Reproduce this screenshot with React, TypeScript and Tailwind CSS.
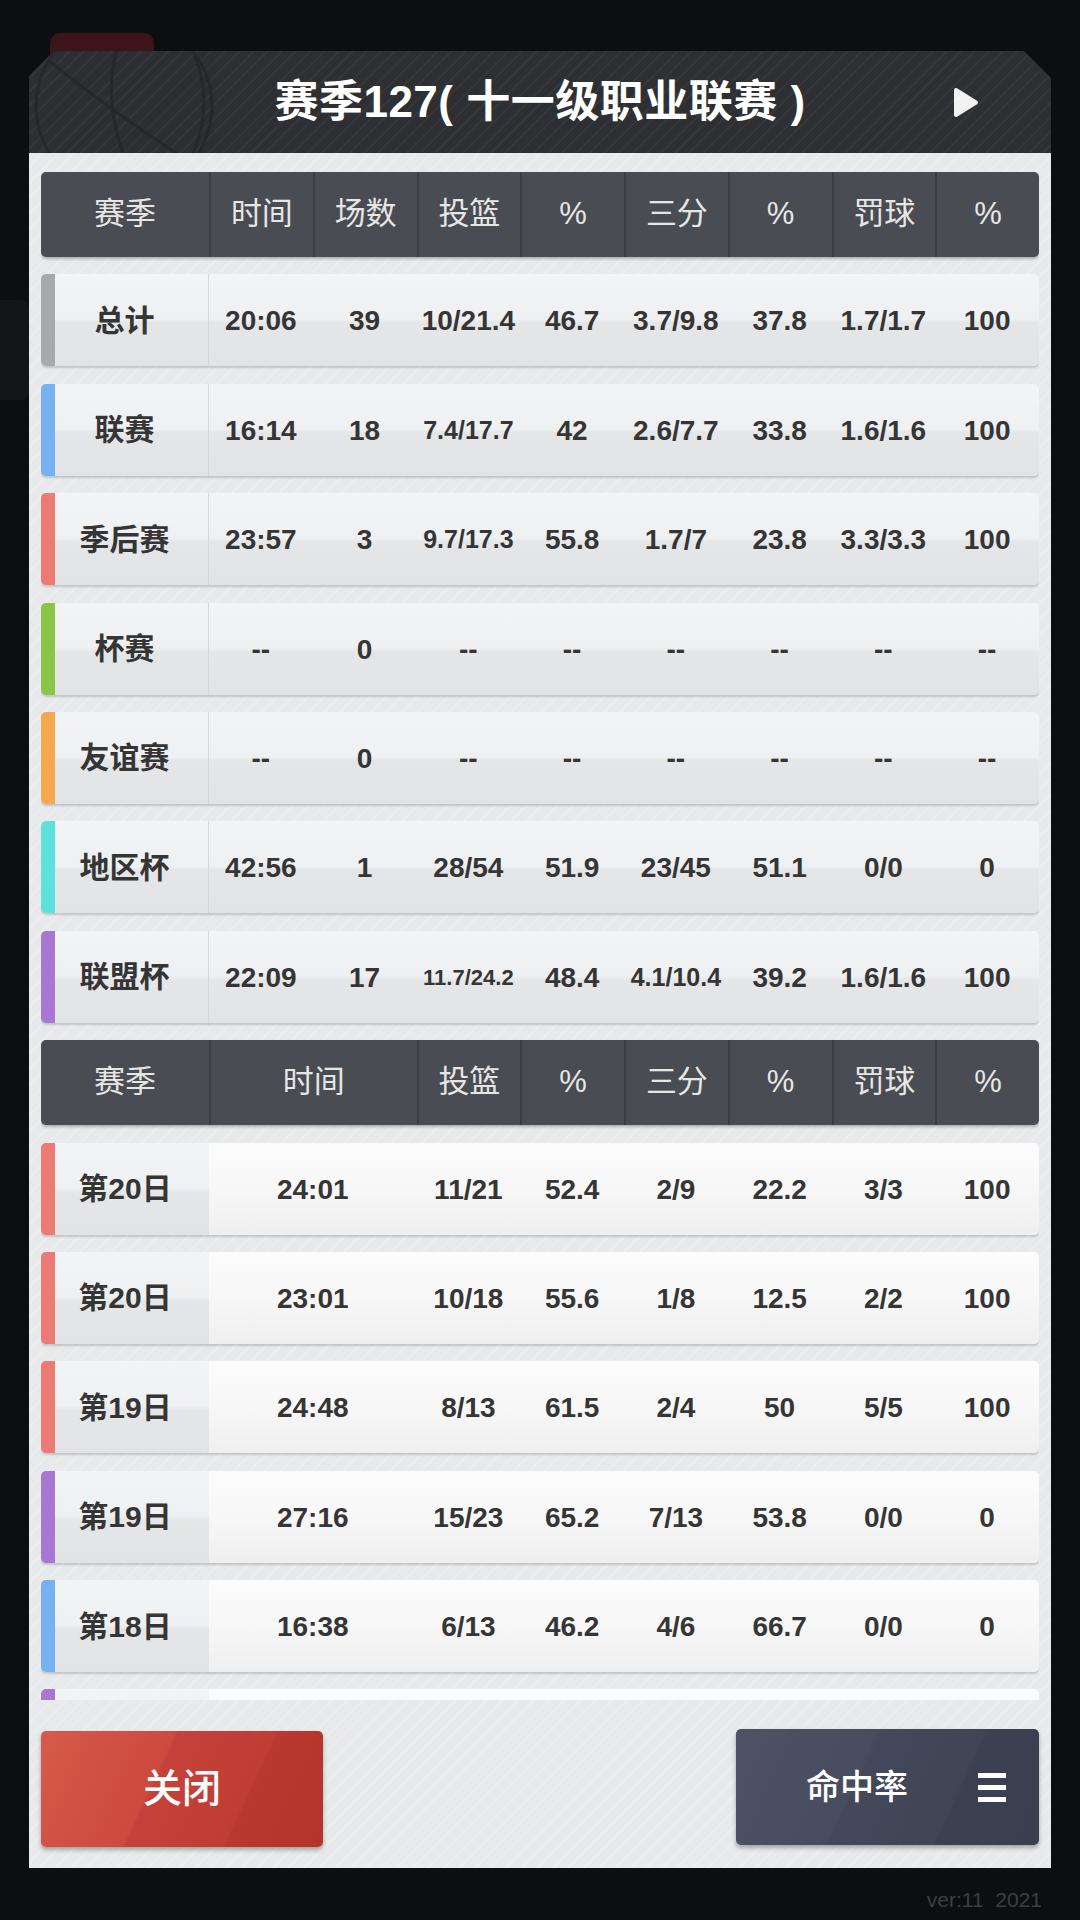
import React from "react";

type Row = { label: string; bar: string; vals: string[] };

const table1: Row[] = [
  { label: "总计", bar: "border-[#a9a9a9]", vals: ["20:06", "39", "10/21.4", "46.7", "3.7/9.8", "37.8", "1.7/1.7", "100"] },
  { label: "联赛", bar: "border-[#76b2f2]", vals: ["16:14", "18", "7.4/17.7", "42", "2.6/7.7", "33.8", "1.6/1.6", "100"] },
  { label: "季后赛", bar: "border-[#ec7a77]", vals: ["23:57", "3", "9.7/17.3", "55.8", "1.7/7", "23.8", "3.3/3.3", "100"] },
  { label: "杯赛", bar: "border-[#8cc545]", vals: ["--", "0", "--", "--", "--", "--", "--", "--"] },
  { label: "友谊赛", bar: "border-[#f3a851]", vals: ["--", "0", "--", "--", "--", "--", "--", "--"] },
  { label: "地区杯", bar: "border-[#5fe1db]", vals: ["42:56", "1", "28/54", "51.9", "23/45", "51.1", "0/0", "0"] },
  { label: "联盟杯", bar: "border-[#a777d1]", vals: ["22:09", "17", "11.7/24.2", "48.4", "4.1/10.4", "39.2", "1.6/1.6", "100"] },
];

const table2: Row[] = [
  { label: "第20日", bar: "border-[#ec7a77]", vals: ["24:01", "11/21", "52.4", "2/9", "22.2", "3/3", "100"] },
  { label: "第20日", bar: "border-[#ec7a77]", vals: ["23:01", "10/18", "55.6", "1/8", "12.5", "2/2", "100"] },
  { label: "第19日", bar: "border-[#ec7a77]", vals: ["24:48", "8/13", "61.5", "2/4", "50", "5/5", "100"] },
  { label: "第19日", bar: "border-[#a777d1]", vals: ["27:16", "15/23", "65.2", "7/13", "53.8", "0/0", "0"] },
  { label: "第18日", bar: "border-[#76b2f2]", vals: ["16:38", "6/13", "46.2", "4/6", "66.7", "0/0", "0"] },
  { label: "", bar: "border-[#a777d1]", vals: ["", "", "", "", "", "", ""] },
];

const sizeFor = (v: string) => {
  if (v === "11.7/24.2") return "text-[22px]";
  if (v === "7.4/17.7" || v === "9.7/17.3" || v === "4.1/10.4") return "text-[25px]";
  return "text-[28px]";
};

const FONT = "font-['Liberation_Sans','Noto_Sans_CJK_SC',sans-serif]";

function HeaderRow({ second }: { second?: boolean }) {
  const cells = second
    ? ["时间", "投篮", "%", "三分", "%", "罚球", "%"]
    : ["时间", "场数", "投篮", "%", "三分", "%", "罚球", "%"];
  return (
    <div className="h-[85px] shrink-0 flex rounded-[5px] overflow-hidden bg-[#494c52] shadow-[0_2px_3px_rgba(0,0,0,0.25)] text-[31px] text-[#e6e6e6]">
      <div className="w-[168px] flex items-center justify-center">赛季</div>
      <div className="flex-1 grid grid-cols-8">
        {cells.map((c, i) => (
          <div
            key={i}
            className={`flex items-center justify-center border-l-2 border-[#3c3e43] ${second && i === 0 ? "col-span-2" : ""}`}
          >
            {c}
          </div>
        ))}
      </div>
    </div>
  );
}

function StatRow({ row, second }: { row: Row; second?: boolean }) {
  return (
    <div
      className={`h-[92px] shrink-0 flex rounded-[5px] overflow-hidden border-l-[14px] ${row.bar} shadow-[0_2px_2px_rgba(0,0,0,0.16)] bg-[linear-gradient(180deg,#f3f4f5_0%,#eff0f1_49%,#e4e6e7_53%,#e1e3e4_100%)] text-[#353535] font-bold`}
    >
      <div
        className={`w-[154px] pr-[14px] flex items-center justify-center text-[30px] ${
          second ? "" : "border-r border-[#d4d6d8]"
        }`}
      >
        {row.label}
      </div>
      <div
        className={`flex-1 grid grid-cols-8 ${
          second ? "bg-[linear-gradient(180deg,#fcfcfc_0%,#f7f7f7_50%,#efefef_100%)]" : ""
        }`}
      >
        {row.vals.map((v, i) => (
          <div
            key={i}
            className={`flex items-center justify-center pt-[2px] ${sizeFor(v)} ${second && i === 0 ? "col-span-2" : ""}`}
          >
            {v}
          </div>
        ))}
      </div>
    </div>
  );
}

export default function App() {
  return (
    <div className={`relative w-[1080px] h-[1920px] overflow-hidden bg-[#0d0e12] ${FONT}`}>
      {/* faint background shapes behind the panel */}
      <div className="absolute left-[50px] top-[33px] w-[104px] h-[40px] rounded-[10px] bg-[#3d1419]" />
      <div className="absolute left-[0px] top-[300px] w-[29px] h-[100px] rounded-r-[8px] bg-[#141519]" />

      <div className="relative ml-[29px] pt-[51px] w-[1022px]">
        {/* Title bar */}
        <div className="relative h-[102px] overflow-hidden grid grid-cols-[1fr_auto_1fr] items-center [clip-path:polygon(25px_0,calc(100%-27px)_0,100%_27px,100%_100%,0_100%,0_25px)] bg-[repeating-linear-gradient(135deg,#2d2f33_0px,#2d2f33_8px,#34363a_8px,#34363a_10px)]">
          <svg
            className="absolute left-0 top-[-20px]"
            width="260"
            height="140"
            viewBox="0 0 260 140"
            fill="none"
          >
            <g stroke="#232528" strokeWidth="3" opacity="0.7">
              <circle cx="95" cy="75" r="88" />
              <path d="M20 30 Q95 90 175 140" />
              <path d="M100 -10 Q60 60 110 160" />
              <path d="M150 -5 Q200 70 150 150" />
            </g>
          </svg>
          <div />
          <div className="relative text-[44px] font-bold text-white leading-none tracking-[0.5px]">
            赛季127( 十一级职业联赛 )
          </div>
          <div className="relative flex justify-end pr-[72px]">
            <svg width="26" height="31" viewBox="0 0 26 31">
              <path
                d="M3 3 L23 15.5 L3 28 Z"
                fill="#f2f2f2"
                stroke="#f2f2f2"
                strokeWidth="4"
                strokeLinejoin="round"
              />
            </svg>
          </div>
        </div>

        {/* Body */}
        <div className="h-[1715px] px-[12px] pt-[19px] flex flex-col bg-[repeating-linear-gradient(135deg,#e8e9ea_0px,#e8e9ea_9px,#ecedee_9px,#ecedee_11px)]">
          <div className="h-[1528px] shrink-0 overflow-hidden flex flex-col gap-[17.4px]">
            <HeaderRow />
            {table1.map((r, i) => (
              <StatRow key={i} row={r} />
            ))}
            <HeaderRow second />
            {table2.map((r, i) => (
              <StatRow key={i} row={r} second />
            ))}
          </div>

          <div className="mt-[29px] flex justify-between items-start">
            <button className="mt-[2px] w-[282px] h-[116px] rounded-[5px] flex items-center justify-center text-[39px] font-medium text-white shadow-[0_3px_4px_rgba(0,0,0,0.3)] bg-[linear-gradient(115deg,#d65a4a_0%,#cc4a3e_40%,#c4423a_41%,#bf3d33_70%,#b9382f_71%,#b43429_100%)]">
              关闭
            </button>
            <button className="w-[303px] h-[116px] rounded-[5px] flex items-center pl-[70px] pr-[33px] text-[34px] font-medium text-white shadow-[0_3px_4px_rgba(0,0,0,0.3)] bg-[linear-gradient(115deg,#4d5265_0%,#474c5e_40%,#43485a_41%,#404556_70%,#3c4152_71%,#3a3f50_100%)]">
              <span>命中率</span>
              <span className="ml-auto flex flex-col gap-[7px]">
                <span className="block w-[28px] h-[5px] bg-white" />
                <span className="block w-[28px] h-[5px] bg-white" />
                <span className="block w-[28px] h-[5px] bg-white" />
              </span>
            </button>
          </div>
        </div>
      </div>

      <div className="mt-[16px] pr-[38px] text-right text-[21px] text-[#3c3e44] whitespace-pre">
        ver:11  2021
      </div>
    </div>
  );
}
